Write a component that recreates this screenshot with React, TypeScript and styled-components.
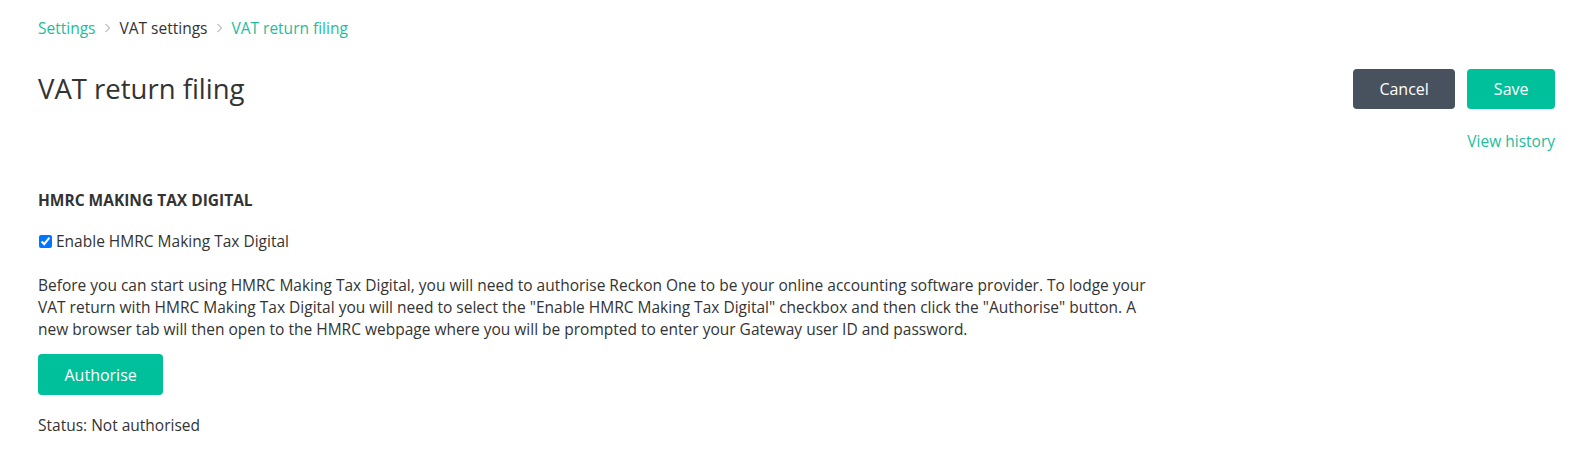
import styled, { createGlobalStyle } from "styled-components";

const GlobalStyle = createGlobalStyle`
  body {
    margin: 0;
    background: #ffffff;
    font-family: "Open Sans", "Liberation Sans", sans-serif;
    color: #333333;
  }
`;

const Chevron = () => (
  <svg width="7" height="10" viewBox="0 0 7 10">
    <path d="M1.5 1l4 4-4 4" fill="none" stroke="#c4c4c4" strokeWidth="1.4" />
  </svg>
);

const App = () => {
  return (
    <>
      <GlobalStyle />
      <Page>
        <Breadcrumb>
          <Crumb $link>Settings</Crumb>
          <Chevron />
          <Crumb>VAT settings</Crumb>
          <Chevron />
          <Crumb $link>VAT return filing</Crumb>
        </Breadcrumb>
        <HeaderRow>
          <Title>VAT return filing</Title>
          <Actions>
            <Button $variant="dark">Cancel</Button>
            <Button>Save</Button>
          </Actions>
        </HeaderRow>
        <HistoryRow>
          <HistoryLink href="#">View history</HistoryLink>
        </HistoryRow>
        <Section>
          <SectionTitle>HMRC MAKING TAX DIGITAL</SectionTitle>
          <CheckLabel>
            <Checkbox type="checkbox" defaultChecked />
            Enable HMRC Making Tax Digital
          </CheckLabel>
          <Description>
            Before you can start using HMRC Making Tax Digital, you will need to authorise Reckon One to be your online
            accounting software provider. To lodge your VAT return with HMRC Making Tax Digital you will need to select
            the "Enable HMRC Making Tax Digital" checkbox and then click the "Authorise" button. A new browser tab will
            then open to the HMRC webpage where you will be prompted to enter your Gateway user ID and password.
          </Description>
          <Button $tall>Authorise</Button>
          <Status>Status: Not authorised</Status>
        </Section>
      </Page>
    </>
  );
};

const Page = styled.div`
  padding: 17px 30px 30px 38px;
`;

const Breadcrumb = styled.nav`
  display: flex;
  align-items: center;
  gap: 8.5px;
  font-size: 15.5px;
  line-height: 22px;
`;

const Crumb = styled.span<{ $link?: boolean }>`
  color: ${(p) => (p.$link ? "#1dbc9c" : "#333333")};
`;

const HeaderRow = styled.div`
  display: flex;
  justify-content: space-between;
  align-items: center;
  margin-top: 30px;
`;

const Title = styled.h1`
  margin: 0;
  font-size: 27.5px;
  font-weight: 400;
  line-height: 40px;
  color: #333333;
`;

const Actions = styled.div`
  display: flex;
  gap: 12px;
`;

const Button = styled.button<{ $variant?: "dark"; $tall?: boolean }>`
  height: ${(p) => (p.$tall ? "41px" : "40px")};
  padding: 0 26.5px;
  border: none;
  border-radius: 4px;
  background: ${(p) => (p.$variant === "dark" ? "#48525e" : "#00bf9b")};
  color: #ffffff;
  font-family: "Open Sans", "Liberation Sans", sans-serif;
  font-size: 16px;
  cursor: pointer;
`;

const HistoryRow = styled.div`
  display: flex;
  justify-content: flex-end;
  margin-top: 21px;
`;

const HistoryLink = styled.a`
  color: #1dbc9c;
  font-size: 15.5px;
  line-height: 22px;
  text-decoration: none;
`;

const Section = styled.section`
  margin-top: 37px;
`;

const SectionTitle = styled.h2`
  margin: 0;
  font-size: 15.5px;
  font-weight: 700;
  line-height: 22px;
  color: #333333;
`;

const CheckLabel = styled.label`
  display: flex;
  align-items: center;
  gap: 4px;
  margin-top: 19px;
  font-size: 15.5px;
  line-height: 22px;
`;

const Checkbox = styled.input`
  margin: 0 0 0 1px;
  width: 13px;
  height: 13px;
  accent-color: #0075ff;
`;

const Description = styled.p`
  margin: 22px 0 14px;
  max-width: 1130px;
  font-size: 15.5px;
  line-height: 22px;
`;

const Status = styled.div`
  margin-top: 19px;
  font-size: 15.5px;
  line-height: 22px;
`;

export default App;
